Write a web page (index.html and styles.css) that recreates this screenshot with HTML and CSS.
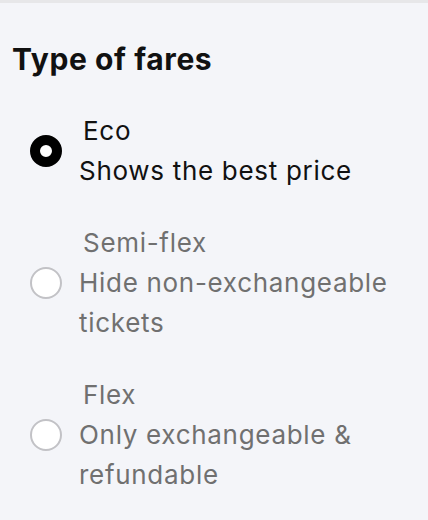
FILE: index.html
```html
<!DOCTYPE html>
<html lang="en">
	<head>
		<title>Type of fares</title>
		<link rel="stylesheet" href="styles.css">
	</head>
	<body>
		<section class="fares">
			<h2>Type of fares</h2>
			<label class="fare selected">
				<input type="radio" name="fare" value="eco" checked>
				<span class="radio"></span>
				<span class="text">
					<span class="name">Eco</span>
					<span class="desc">Shows the best price</span>
				</span>
			</label>
			<label class="fare">
				<input type="radio" name="fare" value="semi-flex">
				<span class="radio"></span>
				<span class="text">
					<span class="name">Semi-flex</span>
					<span class="desc">Hide non-exchangeable tickets</span>
				</span>
			</label>
			<label class="fare">
				<input type="radio" name="fare" value="flex">
				<span class="radio"></span>
				<span class="text">
					<span class="name">Flex</span>
					<span class="desc">Only exchangeable &amp; refundable</span>
				</span>
			</label>
		</section>
	</body>
</html>
```
FILE: styles.css
```css
html, body {
	margin: 0;
	height: 100%;
}
body {
	font-family: Inter, "Noto Sans", sans-serif;
	background: #f4f5f9;
	border-top: 3px solid #e7e7e9;
	box-sizing: border-box;
}
.fares {
	padding: 38px 12px 0 12px;
	display: flex;
	flex-direction: column;
	gap: 32px;
}
h2 {
	margin: 0 0 2px 0;
	font-size: 30px;
	line-height: 36px;
	font-weight: 700;
	color: #111;
	letter-spacing: 0.6px;
}
.fare {
	display: flex;
	align-items: center;
	gap: 17px;
	padding-left: 18px;
	color: #707070;
	cursor: pointer;
}
.fare input {
	display: none;
}
.radio {
	flex: none;
	width: 32px;
	height: 32px;
	border-radius: 50%;
	border: 2px solid #c2c2c6;
	background: #fff;
	box-sizing: border-box;
}
.selected {
	color: #111;
}
.selected .radio {
	border: 10px solid #000;
}
.text {
	display: flex;
	flex-direction: column;
	font-size: 26px;
	line-height: 40px;
	letter-spacing: 0.7px;
}
.name {
	padding-left: 4px;
}
```
